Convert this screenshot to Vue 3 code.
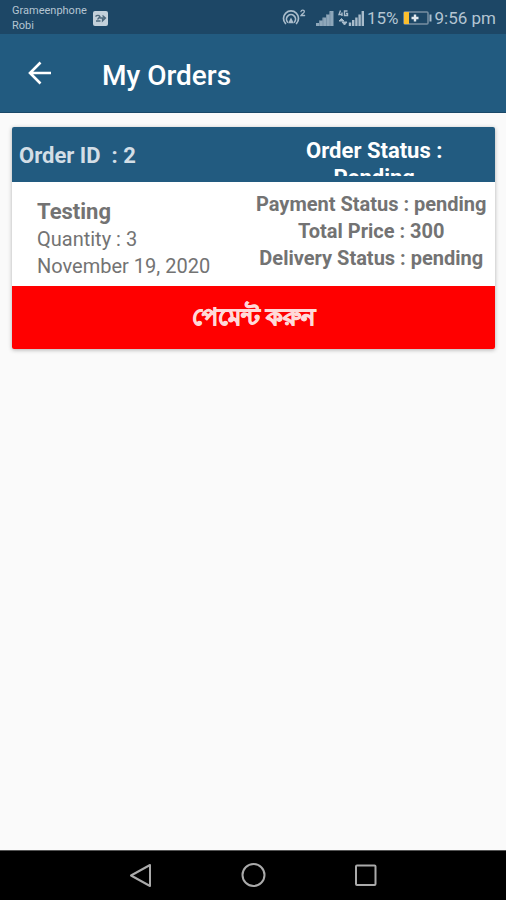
<template>
  <div class="screen">
    <div class="status-bar">
      <div class="carriers">
        <span>Grameenphone</span>
        <span>Robi</span>
      </div>
      <svg class="sim" viewBox="0 0 15 15" width="15" height="15" aria-hidden="true">
        <rect x="0" y="0" width="15" height="15" rx="2" fill="#c3d0da" />
        <path d="M2.5 5.5C4 4 6 4 7 5.500L4.500 8.500M3 10H7.500M6.500 7H12.500M9.500 4.500L12.500 7L9.500 10V7" fill="none" stroke="#4d687c" stroke-width="1.300" />
      </svg>
      <div class="indicators">
        <svg viewBox="0 0 24 20" width="24" height="20" aria-hidden="true">
          <g fill="none" stroke="#a9bccb" stroke-width="1.700" stroke-linecap="round">
            <path d="M3.500 15.500A7.500 7.500 0 1 1 14.500 15.500" />
            <path d="M5.500 14A4.500 4.500 0 1 1 12.500 14" />
            <path d="M7.500 14.500L9 11.500L10.500 14.500Z" fill="#a9bccb" />
            <path d="M19 3.500C19.300 1.700 22.500 1.700 22.300 3.700C22.200 5 20 6 19 7.500H22.600" stroke-width="1.300" />
          </g>
        </svg>
        <svg class="signal" viewBox="0 0 18 17" width="18" height="17" aria-hidden="true">
          <path d="M0 16V13H3V10.500H6.500V7.500H10V4.500H13.500V1H17.500V16Z" fill="#8ea7ba" />
          <path d="M3.500 16V11M7 16V8M10.500 16V5M14 16V2" stroke="#6d8ba2" stroke-width="0.700" />
        </svg>
        <svg class="signal-lte" viewBox="0 0 27 17" width="27" height="17" aria-hidden="true">
          <path d="M2.500 0.500L1 4.500H4.500M4 2.500V6M9.500 1H6.500V5.500H9.500V3.500H8" fill="none" stroke="#a9bccb" stroke-width="1.400" />
          <path d="M1 11L3.500 8.500L6 11ZM4 12L6.500 15L9 12Z" fill="#a9bccb" stroke="#a9bccb" />
          <path d="M12 16V12.500M15.200 16V10M18.400 16V7.500M21.600 16V4.500M24.800 16V1" stroke="#a9bccb" stroke-width="2.400" />
        </svg>
        <span class="percent">15%</span>
        <svg class="battery" viewBox="0 0 29 14" width="29" height="14" aria-hidden="true">
          <rect x="1" y="1" width="24" height="12" rx="1" fill="none" stroke="#7890a3" stroke-width="1.500" />
          <rect x="1" y="1" width="5" height="12" fill="#fbbf2d" />
          <path d="M12 3.500V10.500M8.500 7H15.500" stroke="#e2e9ee" stroke-width="2.400" />
          <path d="M27.500 3.500V10.500" stroke="#a9bccb" stroke-width="2" />
        </svg>
        <span class="time">9:56 pm</span>
      </div>
    </div>

    <header class="app-bar">
      <button type="button" class="back" aria-label="Back">
        <svg viewBox="0 0 24 24" width="24" height="24" aria-hidden="true">
          <path d="M23 12H2M12.500 1.500L2 12L12.500 22.500" fill="none" stroke="#fff" stroke-width="2.600" />
        </svg>
      </button>
      <h1>My Orders</h1>
    </header>

    <main class="content">
      <article v-for="order in orders" :key="order.id" class="card">
        <div class="card-head">
          <h2 class="order-id">Order ID&nbsp; : {{ order.id }}</h2>
          <div class="head-side">
            <p class="order-status">Order Status :<br>{{ order.status }}</p>
          </div>
        </div>
        <div class="card-body">
          <div class="product">
            <h3>{{ order.product }}</h3>
            <p>Quantity : {{ order.quantity }}</p>
            <p>{{ order.date }}</p>
          </div>
          <div class="summary">
            <p>Payment Status : {{ order.payment }}</p>
            <p>Total Price : {{ order.total }}</p>
            <p>Delivery Status : {{ order.delivery }}</p>
          </div>
        </div>
        <button type="button" class="pay">পেমেন্ট করুন</button>
      </article>
    </main>

    <nav class="nav-bar">
      <button type="button" aria-label="Back">
        <svg viewBox="0 0 26 26" width="26" height="26" aria-hidden="true">
          <path d="M22 2V23L3 12.500Z" />
        </svg>
      </button>
      <button type="button" aria-label="Home">
        <svg viewBox="0 0 26 26" width="26" height="26" aria-hidden="true">
          <circle cx="13.500" cy="12" r="11" />
        </svg>
      </button>
      <button type="button" aria-label="Recent apps">
        <svg viewBox="0 0 26 26" width="26" height="26" aria-hidden="true">
          <rect x="4" y="2.500" width="19.500" height="19.500" rx="1" />
        </svg>
      </button>
    </nav>
  </div>
</template>

<script setup>
import { ref } from 'vue'

const orders = ref([
  {
    id: 2,
    status: 'Pending',
    product: 'Testing',
    quantity: 3,
    date: 'November 19, 2020',
    payment: 'pending',
    total: 300,
    delivery: 'pending'
  }
])
</script>

<style>
body { margin: 0; background: #fafafa; }
</style>

<style scoped>
.screen { display: flex; flex-direction: column; min-height: 100vh; background: #fafafa; color: #737373; font-family: Roboto, "Noto Sans", sans-serif; }
h1, h2, h3, p { margin: 0; }
button { padding: 0; border: 0; background: none; font-family: inherit; cursor: pointer; }
svg { display: block; flex: none; }

.status-bar { display: flex; align-items: center; height: 34px; padding: 0 10px 0 12px; background: #1d4766; color: #b4c5d2; }
.carriers { display: flex; flex-direction: column; padding-top: 2px; font-size: 11px; line-height: 15px; }
.sim { margin: 2px 0 0 6px; }
.indicators { display: flex; align-items: center; padding-top: 2px; margin-left: auto; }
.signal { margin-left: 10px; }
.signal-lte { margin-left: 4px; }
.percent { margin-left: 2px; font-size: 17px; }
.battery { margin: 0 3px 0 4px; }
.time { font-size: 17px; }

.app-bar { display: flex; align-items: center; gap: 50px; height: 79px; padding: 0 28px; background: #225b80; border-bottom: 1px solid #1a4868; box-sizing: border-box; }
.app-bar h1 { padding-top: 6px; color: #fff; font-size: 28px; font-weight: 500; line-height: 32px; }

.content { flex: 1; padding: 14px 11px 14px 12px; }
.card { overflow: hidden; border-radius: 2px; background: #fff; box-shadow: 0 1px 4px rgba(0, 0, 0, 0.3); }
.card-head { display: grid; grid-template-columns: 1fr 1fr; height: 55px; background: #225b80; }
.order-id { align-self: center; padding: 2px 0 0 7px; color: #d3dee6; font-size: 22px; font-weight: 700; }
.head-side { padding: 10px 0 6px; overflow: hidden; }
.order-status { height: 39px; overflow: hidden; color: #fff; font-size: 22px; font-weight: 700; line-height: 27px; text-align: center; }

.card-body { display: grid; grid-template-columns: 1fr 1fr; height: 104px; }
.product { padding: 16px 0 0 25px; font-size: 20px; line-height: 27px; }
.product h3 { font-size: 22px; font-weight: 700; line-height: 28px; }
.summary { padding: 9px 6px 0 0; font-size: 20px; font-weight: 700; line-height: 27px; text-align: center; white-space: nowrap; }

.pay { display: block; width: 100%; height: 63px; background: #f00; color: #ffd9d9; font-size: 24px; font-weight: 700; -webkit-text-stroke: 1px #ffd9d9; }

.nav-bar { display: flex; justify-content: center; align-items: center; gap: 86px; height: 50px; background: #000; border-top: 1px solid #555; box-sizing: border-box; }
.nav-bar svg { fill: none; stroke: #aaa; stroke-width: 2; stroke-linejoin: round; }
</style>
